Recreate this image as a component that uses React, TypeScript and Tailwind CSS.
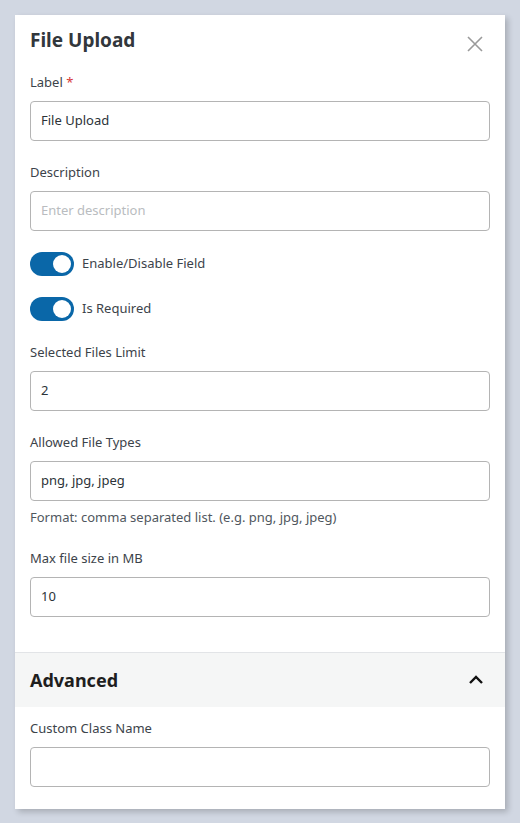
import React from "react";

const font = { fontFamily: '"Noto Sans", "Open Sans", sans-serif' };

function Field({ label, value, placeholder, required, help }: { label: string; value?: string; placeholder?: string; required?: boolean; help?: string }) {
  return (
    <div className="flex flex-col">
      <div className="text-[13px] leading-[18px] text-[#3c434a]">
        {label}
        {required && <span className="text-[#d63638]"> *</span>}
      </div>
      <div className="mt-[10px] h-[40px] w-full rounded-[4px] border border-[#b4b4b4] px-[10px] flex items-center text-[13px] text-[#2c3338]">
        {value ? <span>{value}</span> : <span className="text-[#b9bcc0]">{placeholder ?? ""}</span>}
      </div>
      {help && <div className="mt-[7px] text-[13px] leading-[18px] text-[#50575e]">{help}</div>}
    </div>
  );
}

function Toggle({ label }: { label: string }) {
  return (
    <div className="flex items-center gap-[8px]">
      <div className="relative h-[24px] w-[44px] rounded-full bg-[#0a67a8]">
        <div className="absolute right-[3px] top-[3px] h-[18px] w-[18px] rounded-full bg-white" />
      </div>
      <span className="text-[13px] text-[#3c434a]">{label}</span>
    </div>
  );
}

export default function App() {
  return (
    <div className="min-h-[823px] w-[520px] bg-[#d1d7e2] pt-[15px] pl-[15px]" style={font}>
      <div className="w-[490px] bg-white shadow-[3px_3px_6px_rgba(0,0,0,0.2)]">
        <div className="px-[15px] pt-[12px]">
          <div className="flex items-center justify-between h-[26px]">
            <h2 className="text-[19px] font-bold text-[#32373c]">File Upload</h2>
            <svg width="16" height="16" viewBox="0 0 16 16" className="mr-[7px] mt-[8px]">
              <path d="M1 1 L15 15 M15 1 L1 15" stroke="#9a9a9a" strokeWidth="1.6" />
            </svg>
          </div>
          <div className="mt-[20px]" />
        </div>
        <div className="px-[15px] flex flex-col">
          <Field label="Label" value="File Upload" required />
          <div className="h-[22px]" />
          <Field label="Description" placeholder="Enter description" />
          <div className="h-[21px]" />
          <Toggle label="Enable/Disable Field" />
          <div className="h-[21px]" />
          <Toggle label="Is Required" />
          <div className="h-[22px]" />
          <Field label="Selected Files Limit" value="2" />
          <div className="h-[22px]" />
          <Field label="Allowed File Types" value="png, jpg, jpeg" help="Format: comma separated list. (e.g. png, jpg, jpeg)" />
          <div className="h-[23px]" />
          <Field label="Max file size in MB" value="10" />
          <div className="h-[35px]" />
        </div>
        <div className="border-t border-[#e2e4e7] bg-[#f5f6f6] h-[55px] px-[15px] flex items-center justify-between">
          <span className="text-[18px] font-bold text-[#1e1e1e]">Advanced</span>
          <svg width="16" height="10" viewBox="0 0 16 10" className="mr-[6px]">
            <path d="M2 8 L8 2 L14 8" stroke="#111" strokeWidth="2.4" fill="none" />
          </svg>
        </div>
        <div className="px-[15px] pt-[12px] pb-[22px]">
          <Field label="Custom Class Name" />
        </div>
      </div>
    </div>
  );
}
